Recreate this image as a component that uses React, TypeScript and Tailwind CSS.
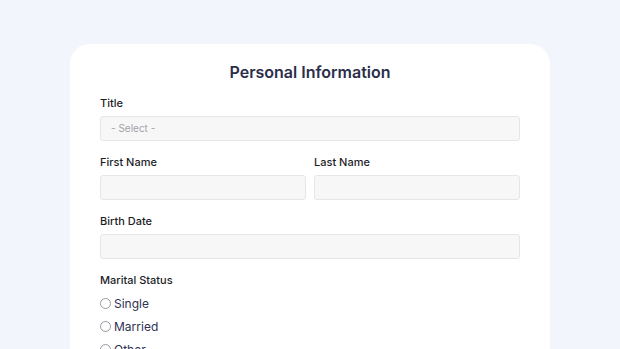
const inputCls =
  "h-[25px] w-full rounded-[3px] border border-[#e6e6e9] bg-[#f7f7f8]";

function Label({ children }: { children: React.ReactNode }) {
  return <div className="text-[11px] font-medium leading-[14px] text-[#1d1d27]">{children}</div>;
}

function Radio({ label }: { label: string }) {
  return (
    <div className="flex h-[23px] items-center gap-[3px]">
      <span className="h-[11px] w-[11px] rounded-full border border-[#9a9aa3] bg-white" />
      <span className="text-[12px] leading-none text-[#2f3150]">{label}</span>
    </div>
  );
}

export default function App() {
  return (
    <div
      className="h-[349px] w-[620px] overflow-hidden bg-[#f3f5fd]"
      style={{ fontFamily: "Inter, 'Noto Sans', sans-serif" }}
    >
      <div className="mx-auto mt-[44px] w-[480px] rounded-t-[20px] bg-white px-[30px] pt-[18px] pb-10">
        <h1 className="text-center text-[16px] font-semibold leading-5 text-[#2b2e4a]">
          Personal Information
        </h1>

        <div className="mt-[14px]">
          <Label>Title</Label>
          <div className={`${inputCls} mt-[6px] flex items-center px-[10px] h-[23px]`}>
            <span className="text-[10px] text-[#a3a3a8]">- Select -</span>
          </div>
        </div>

        <div className="mt-[14px] grid grid-cols-2 gap-2">
          <div>
            <Label>First Name</Label>
            <div className={`${inputCls} mt-[6px]`} />
          </div>
          <div>
            <Label>Last Name</Label>
            <div className={`${inputCls} mt-[6px]`} />
          </div>
        </div>

        <div className="mt-[14px]">
          <Label>Birth Date</Label>
          <div className={`${inputCls} mt-[6px]`} />
        </div>

        <div className="mt-[14px]">
          <Label>Marital Status</Label>
          <div className="mt-[5px] flex flex-col">
            <Radio label="Single" />
            <Radio label="Married" />
            <Radio label="Other" />
          </div>
        </div>
      </div>
    </div>
  );
}
